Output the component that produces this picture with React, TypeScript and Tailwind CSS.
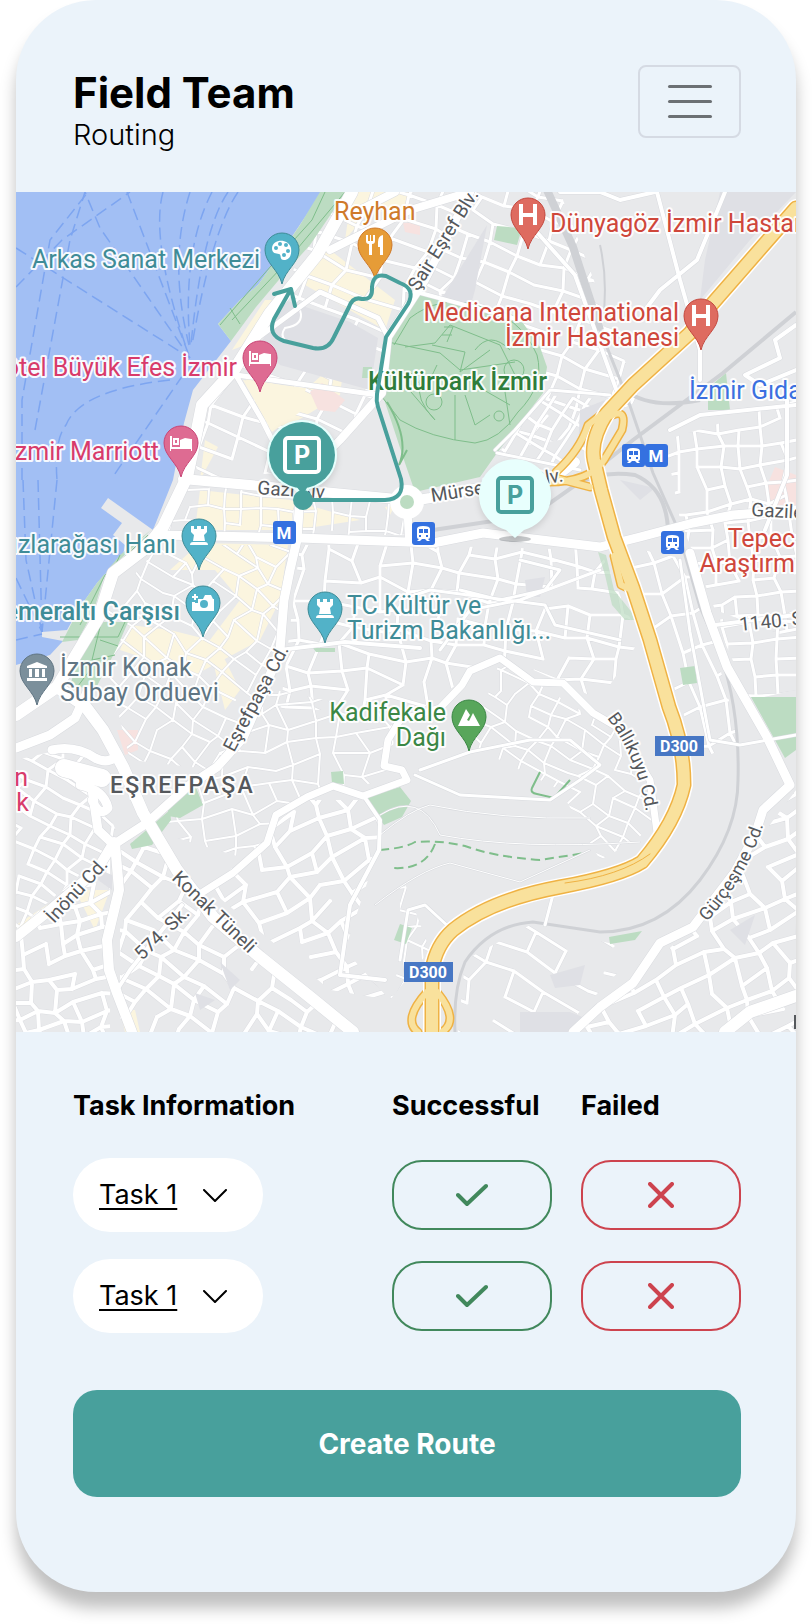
import { useId, type ReactNode } from "react";

type Point = [number, number];

function seeded(seed: number) {
  let s = seed;
  return () => {
    s = (s * 16807) % 2147483647;
    return s / 2147483647;
  };
}

/* Irregular street mesh: a jittered grid whose neighbours are joined at random. */
function mesh(cx: number, cy: number, w: number, h: number, angle: number, dx: number, dy: number, seed: number, jitter = 0.3, keep = 0.84) {
  const rnd = seeded(seed);
  const cols = Math.ceil(w / dx);
  const rows = Math.ceil(h / dy);
  const a = (angle * Math.PI) / 180;
  const pts: Point[][] = [];
  for (let r = 0; r <= rows; r++) {
    const row: Point[] = [];
    for (let c = 0; c <= cols; c++) {
      const x = -w / 2 + c * dx + (rnd() - 0.5) * dx * jitter * 2;
      const y = -h / 2 + r * dy + (rnd() - 0.5) * dy * jitter * 2;
      row.push([Math.round(cx + x * Math.cos(a) - y * Math.sin(a)), Math.round(cy + x * Math.sin(a) + y * Math.cos(a))]);
    }
    pts.push(row);
  }
  let d = "";
  for (let r = 0; r <= rows; r++) {
    for (let c = 0; c <= cols; c++) {
      if (c < cols && rnd() < keep) d += `M${pts[r][c]}L${pts[r][c + 1]}`;
      if (r < rows && rnd() < keep) d += `M${pts[r][c]}L${pts[r + 1][c]}`;
    }
  }
  return d;
}

const districts: { area: string; d: string; width: number }[] = [
  { area: "M345 192H470L412 295L378 400L310 470L200 480L185 430L240 350Z", d: mesh(320, 340, 420, 420, 22, 34, 22, 11, 0.15), width: 3 },
  { area: "M470 192H560L640 400L560 440L500 450L545 390L540 340L417 292Z", d: mesh(540, 330, 260, 340, 20, 27, 21, 23, 0.18), width: 3 },
  { area: "M545 395L615 400L575 470L497 455Z", d: mesh(560, 430, 140, 110, 30, 16, 20, 31, 0.1), width: 3 },
  { area: "M185 485L400 500L420 535H160Z", d: mesh(300, 510, 260, 60, 3, 18, 16, 41, 0.15), width: 2 },
  { area: "M300 545H400L600 550L640 640L600 700L500 655L420 710H280Z", d: mesh(450, 620, 360, 190, 8, 27, 23, 53, 0.3), width: 3 },
  { area: "M160 545H290L275 690L215 770L130 760L95 620Z", d: mesh(200, 650, 220, 260, 35, 21, 17, 67, 0.3), width: 2 },
  { area: "M215 770L275 690L400 715L385 780L300 800L250 860L150 830Z", d: mesh(290, 770, 280, 200, -10, 24, 19, 71, 0.3), width: 2 },
  { area: "M16 760L80 745L120 840L16 930Z", d: mesh(70, 840, 180, 220, 28, 21, 15, 83, 0.22), width: 3 },
  { area: "M16 930L110 850V1032H16Z", d: mesh(65, 950, 170, 210, -15, 21, 16, 97, 0.25), width: 4 },
  { area: "M120 850L150 830L250 950L350 1032H120Z", d: mesh(220, 940, 270, 230, 32, 25, 18, 101, 0.25), width: 4 },
  { area: "M210 890L300 800L380 800L378 850L345 950L390 1000L330 990Z", d: mesh(300, 900, 240, 240, -28, 25, 20, 113, 0.28), width: 4 },
  { area: "M500 660L620 735L655 830L600 860L560 790L470 745Z", d: mesh(570, 750, 230, 210, 30, 20, 14, 127, 0.3), width: 2 },
  { area: "M620 545L690 560L740 740L700 760L650 620Z", d: mesh(670, 640, 130, 230, -18, 24, 32, 131, 0.16), width: 3 },
  { area: "M665 440L796 400V640L715 610L680 520Z", d: mesh(740, 520, 190, 260, -7, 21, 19, 149, 0.22), width: 3 },
  { area: "M715 620L796 610V690L750 700Z", d: mesh(760, 660, 120, 110, -3, 26, 18, 151, 0.1), width: 3 },
  { area: "M690 930L796 790V1032H575Z", d: mesh(710, 930, 300, 260, -24, 26, 19, 163, 0.28), width: 4 },
  { area: "M465 960L530 925L640 950L560 1032H458Z", d: mesh(540, 990, 200, 150, 28, 36, 25, 173, 0.2, 0.7), width: 3 },
  { area: "M400 870L430 950L390 1000L400 960Z", d: mesh(400, 930, 70, 120, 12, 16, 18, 181), width: 2 },
];

const avenues: { d: string; width: number }[] = [
  { d: "M352 192L317 255L270 313L234 370L202 405L197 430L187 477L163 527L147 547L113 573L99 617L73 660L57 687L16 715", width: 12 },
  { d: "M470 192L410 210L330 250M395 192L350 215", width: 8 },
  { d: "M234 372L262 420L295 485M255 340L320 292L378 318L388 337M236 375L378 395", width: 5 },
  { d: "M183 479L260 486L407 500", width: 10 },
  { d: "M160 535L300 538L433 543L483 533L533 539L600 547L640 537L693 523L733 515L796 510", width: 9 },
  { d: "M407 502L430 498L484 487L555 477L575 462", width: 10 },
  { d: "M407 500L409 540M470 192L425 280L388 337L382 393L340 440L310 470", width: 8 },
  { d: "M300 495L297 540L290 570L284 600L280 650L262 695L243 738L217 767L187 787L147 823L113 845", width: 9 },
  { d: "M57 687L85 706L103 730L123 767L143 813L177 870L213 917L260 957L310 997L353 1032", width: 12 },
  { d: "M16 748L50 735L75 718L88 690M52 750Q75 745 95 758Q108 765 118 755M65 768L92 790L98 830L114 845M80 785Q104 790 108 808Q100 818 92 800", width: 9 },
  { d: "M64 768L102 778", width: 18 },
  { d: "M114 842L97 870L50 910L16 937M115 843L119 890L107 940L109 970L117 993L132 1032", width: 10 },
  { d: "M195 897L233 873L267 843L276 815L307 797L333 786L363 796L407 780L402 770L384 766L388 740L400 720L440 708L462 685L470 671L500 658L533 682L563 683L593 713L617 727L650 780L657 832", width: 7 },
  { d: "M115 993L130 970L182 905M280 650L345 642L420 648M363 795L380 820L379 850L350 905L340 975L385 980", width: 4 },
  { d: "M690 553L707 613L727 667L767 737L790 785L763 810L755 835L735 872L693 927L660 943L633 983L600 1007L573 1032", width: 9 },
  { d: "M796 996L750 1012L725 1032", width: 12 },
  { d: "M535 230L575 275L620 400M560 192L600 192L620 200L655 192M657 192L680 280L700 350V380M725 192L697 260L660 290L645 310M417 292L520 320", width: 4 },
  { d: "M796 325L775 340L780 358L745 375L760 385L796 370M670 430L700 415L796 405M787 400V475L765 530M715 625L770 618L796 615", width: 4 },
  { d: "M495 450L515 430L550 390L610 395M497 453L580 470", width: 3 },
  { d: "M415 775L460 795L550 800L580 780L600 765L570 740L530 740L470 752L420 770M400 960L408 910L425 905L450 928M555 887L545 925M680 560L690 632L710 740L740 745L796 735", width: 3 },
  { d: "M520 560L560 570L545 590L500 600L460 590M440 650L470 610L520 600L600 570M400 600L430 590L545 605L555 625L620 640", width: 3 },
  { d: "M380 815Q420 790 440 835Q520 850 640 842M380 835Q410 810 430 805Q500 820 590 818M375 905Q420 870 450 863L520 882L590 850", width: 1 },
];

const ferries = [
  "M16 248L190 358", "M16 287L62 240L130 192", "M35 430L70 240L85 192L100 228L190 358", "M22 480V400L50 240L88 192",
  "M127 192L190 358", "M163 192Q150 240 187 350", "M190 192Q168 260 189 345", "M212 192Q182 250 190 345", "M228 192Q202 230 191 345", "M238 192Q212 230 192 345",
  "M183 375L112 478", "M170 380Q80 390 66 425Q54 440 57 480", "M23 480L26 560L42 632", "M38 480L42 632", "M57 480L42 632", "M16 578L42 632", "M16 640L42 634",
];

const motorway = "M796 208L713 303L690 333L633 385L607 413Q590 440 594 460L601 490L614 537L633 588L650 640L669 707Q684 745 684 785Q676 822 642 862Q620 876 560 887Q490 900 453 930Q436 945 432 970V1032";
const ramps = "M548 482Q590 482 604 460L622 430Q628 405 607 418M556 472Q580 450 588 425L607 410M548 476L590 487M614 556L621 585L636 592M427 992Q402 1020 418 1032M437 992Q460 1020 442 1032";
const railway = "M547 190L573 247L600 330L627 397L653 473L677 527L700 607L720 653Q740 710 738 780Q738 830 700 880Q660 932 600 932L533 922Q490 925 465 962Q453 990 455 1032";
const branchRailway = "M796 312L723 373L633 440L580 482L533 515L433 530M625 390Q650 410 700 400M575 485Q600 470 635 475Q670 490 668 540";
const route = "M303 500H385Q405 499 401 479L378 407Q376 401 377 394L386 337L408 304Q416 289 400 283L386 276Q373 273 372 287V290Q372 300 362 299Q353 296 349 307L334 337Q328 351 313 348L284 341Q267 335 274 319L291 289M274 294L291 289L295 306";

function Bed() {
  return (
    <g fill="white">
      <path d="M-11-7H-9V4H10V-4H11V8H10V6H-10V8H-11Z" />
      <path fillRule="evenodd" d="M-8-5H-2V2H-8ZM-6-3V0H-4V-3Z" />
      <path d="M-1 4V-3L4-5L10-4V4Z" />
    </g>
  );
}
function Rook() {
  return <path d="M-8-10H-5V-7H-2V-10H2V-7H5V-10H8V-4L5-1L6 5H-6L-5-1L-8-4ZM-9 9Q-9 6-6 6H6Q9 6 9 9Z" fill="white" />;
}
function Hospital() {
  return <path d="M-7-11V10M7-11V10M-7 0H7" stroke="white" strokeWidth="4" />;
}
function Palette() {
  return (
    <g>
      <path d="M-10-2C-9-11 6-12 9-2C10 4 8 10 2 10C-3 10 0 5-3 4C-6 3-10 4-10-2Z" fill="white" />
      <g fill="#52b2c8"><circle cx="-6" cy="-2" r="2" /><circle cx="-2" cy="-6" r="2" /><circle cx="4" cy="-5" r="2" /><circle cx="6" cy="1" r="2" /><circle cx="2" cy="5" r="2" /></g>
    </g>
  );
}
function Utensils() {
  return <path d="M-9-10V-4Q-9-1-6-1V10H-3V-1Q0-1 0-4V-10H-2V-4H-4V-10H-5V-4H-7V-10ZM8-10Q3-9 3-3V2H5V10H8V-10Z" fill="white" />;
}
function Camera() {
  return (
    <g>
      <path d="M-3-4H0L2-8H8L10-4H11V8H-11V-1H-8V0H-5V-4Z" fill="white" />
      <circle cx="1" cy="1" r="4" fill="#52b2c8" />
      <path d="M-8-9V-3M-11-6H-5" stroke="white" strokeWidth="2" />
    </g>
  );
}
function Museum() {
  return <path d="M-10-5L0-9L10-5V-3H-10ZM-8-2H-5V6H-8ZM-2-2H2V6H-2ZM5-2H8V6H5ZM-10 7H10V10H-10Z" fill="white" />;
}
function Mountain() {
  return <path d="M-11 9L-3-8L1-2L-2 3L0 4L4-4L11 9Z" fill="white" />;
}

function Pin({ x, y, color, edge, children }: { x: number; y: number; color: string; edge: string; children: ReactNode }) {
  return (
    <g transform={`translate(${x} ${y})`}>
      <path d="M0 34C-3 20-17 13-17 0A17 17 0 0 1 17 0C17 13 3 20 0 34Z" fill={color} stroke={edge} strokeWidth="1" />
      {children}
    </g>
  );
}

const halo = "stroke-white/90 [paint-order:stroke] [stroke-linejoin:round] [stroke-width:4px]";

function Place({ x, y, end, className, children }: { x: number; y: number; end?: boolean; className: string; children: string }) {
  return (
    <text x={x} y={y} textAnchor={end ? "end" : "start"} className={`text-[25px] ${halo} ${className}`}>
      {children}
    </text>
  );
}

function Street({ x, y, angle, children }: { x: number; y: number; angle: number; children: string }) {
  return (
    <text transform={`translate(${x} ${y}) rotate(${angle})`} className={`fill-[#55585c] text-[19px] ${halo}`}>
      {children}
    </text>
  );
}

function Metro({ x, y }: { x: number; y: number }) {
  return (
    <g transform={`translate(${x} ${y})`}>
      <rect width="23" height="23" rx="3" fill="#3471e0" />
      <text x="11" y="18" textAnchor="middle" className="fill-white text-[17px] font-bold">M</text>
    </g>
  );
}

function Train({ x, y }: { x: number; y: number }) {
  return (
    <g transform={`translate(${x} ${y})`}>
      <rect width="23" height="23" rx="3" fill="#3471e0" />
      <path d="M5 7Q5 4 11 4Q18 4 18 7V15Q18 17 16 17L18 19H15L13 17H10L8 19H5L7 17Q5 17 5 15Z" fill="white" />
      <path d="M7 7H11V11H7ZM12 7H16V11H12ZM7 13H9V15H7ZM14 13H16V15H14Z" fill="#3471e0" />
    </g>
  );
}

function RoadShield({ x, y }: { x: number; y: number }) {
  return (
    <g transform={`translate(${x} ${y})`}>
      <rect width="49" height="20" fill="#4777c4" />
      <text x="24" y="16" textAnchor="middle" className="fill-white text-[16px] font-bold">D300</text>
    </g>
  );
}

function ParkingSign({ x, y, color }: { x: number; y: number; color: string }) {
  return (
    <g transform={`translate(${x} ${y})`}>
      <rect x="-17" y="-17" width="34" height="34" rx="3" fill="none" stroke={color} strokeWidth="4" />
      <text y="9" textAnchor="middle" fill={color} className="font-[Inter] text-[25px] font-bold">P</text>
    </g>
  );
}

function CityMap() {
  const id = useId();
  return (
    <svg viewBox="16 192 780 840" className="block h-auto w-full overflow-hidden font-[Roboto,sans-serif]" role="img" aria-label="Route map of İzmir">
      <rect x="16" y="192" width="780" height="840" fill="#e8e9eb" />
      <g fill="#fbf5df">
        <path d="M352 192L410 192L405 215L370 210L345 240Z" />
        <path d="M312 255L330 250L395 300L385 330L305 285Z" />
        <path d="M265 300L272 300L245 345L232 350ZM245 378L305 390L345 355L340 395L290 425L270 430Z" />
        <path d="M205 440L218 447L200 480ZM200 490L290 500L360 520L295 530H195Z" />
        <path d="M200 543L288 545L280 600L260 640L195 675L120 650L130 625L170 630L210 640L240 600L215 570L170 570Z" />
        <path d="M215 640L240 690L225 710L215 670ZM75 890L110 890L95 930L85 910Z" />
        <path d="M16 925L50 903L55 910L20 940ZM120 1010L135 1010L140 1032H125ZM385 507L395 505L390 515Z" />
      </g>
      <g fill="#f7e2e0">
        <path d="M403 223L420 222V235L405 232ZM117 730H138V750L125 755ZM765 490L775 467L796 475V505L768 505Z" />
      </g>

      {districts.map((district, i) => (
        <g key={i}>
          <clipPath id={`${id}-${i}`}><path d={district.area} /></clipPath>
          <g clipPath={`url(#${id}-${i})`} fill="none">
            <path d={district.d} stroke="#dcdde1" strokeWidth={district.width + 1} />
            <path d={district.d} stroke="white" strokeWidth={district.width} strokeLinecap="round" />
          </g>
        </g>
      ))}

      <g fill="#dfe0e5">
        <path d="M285 300L350 322L378 338L370 390L280 365L260 345Z" />
        <path d="M487 225L475 290L470 308L442 298Z" />
        <path d="M720 192H796L750 240L700 300L705 260Z" />
        <path d="M580 410L605 400L560 465L578 450Z" />
        <path d="M620 480L655 488L640 500Z" />
        <path d="M520 1012L570 1012L590 1020L570 1032H520Z" />
        <path d="M550 975L585 965L580 985L555 988Z" />
        <path d="M220 962L240 980L230 990ZM195 993L215 1000L200 1010ZM100 870L112 875V890L98 880Z" />
        <path d="M730 930L755 915L745 945ZM525 580L545 577L540 597H527Z" />
      </g>
      <path d="M243 380L306 388L300 412L272 432Z" fill="#fbf5df" />
      <path d="M310 392L322 383L345 400L335 412L318 410Z" fill="#f7e2e0" />
      <path d="M300 310Q305 325 285 328Q280 335 285 340" fill="none" stroke="white" strokeWidth="2" />

      <path d="M16 192H322L295 232L283 250L258 285L240 300L218 324L231 341L193 390L184 423L173 480L153 530L108 498L101 508L122 523L113 535L125 545L123 555L97 583L80 607L67 630L42 632V637L63 641L50 655L16 665Z" fill="#a2bff4" />
      <g fill="none" stroke="#7da5f0" strokeWidth="1.5" strokeDasharray="12 6">
        {ferries.map((d) => <path key={d} d={d} />)}
      </g>
      <g fill="#bcdcc2">
        <path d="M320 192H346L310 245L283 275L256 307L231 341L218 324L240 300L258 285L283 250L300 225Z" />
        <path d="M151 530L128 552L105 573L94 610L78 640L62 642L80 607L97 583L120 555Z" />
        <path d="M100 622H128L116 650L100 680L95 690L70 685L80 655Z" />
        <path d="M417 294L510 313L523 323L540 347L547 367L543 393L517 427L497 453L480 477L415 492L405 463L382 393L388 337L405 302Z" />
        <path d="M497 226L522 228L517 245L494 240ZM363 367H372V378H362Z" />
        <path d="M708 388L726 373L730 410H708ZM680 668L695 666L697 683L683 685ZM751 697H796V750L785 758Z" />
        <path d="M365 798L400 787L411 801L402 817L384 825ZM331 772L343 771L344 784L332 783Z" />
        <path d="M168 805L195 785L203 805L180 818L168 816ZM130 844L170 810L171 820L152 845L132 849Z" />
        <path d="M400 924L412 928L406 944L394 940ZM609 937L642 931L635 940L610 944ZM313 648H335V652H316Z" />
        <path d="M598 552L606 555L614 590L638 620L625 620L612 605L605 575Z" opacity=".7" />
      </g>
      <g fill="none" stroke="#7fbe8b" strokeWidth="2">
        <path d="M325 192L312 220L285 250L250 290L220 325M345 192L282 267L232 320M230 308L240 324M148 535L105 575L80 625M120 555L95 610M60 637H118L125 622M100 627L92 660L115 655M100 640L118 646M75 690L90 670" strokeWidth="1" />
        <path d="M394 345L410 318Q440 295 475 305Q520 315 537 355Q545 385 518 412Q500 440 475 443Q430 438 400 420L382 397M405 347L435 343L450 325L500 345L515 375L505 392L510 425M388 342L440 353L460 370L515 362M432 345L465 352L460 372L490 350M420 380Q415 400 435 420L405 385M437 365L425 390L410 372M455 395V440M465 395L475 425L490 415M475 385L510 405M475 350Q490 330 510 350M444 327H453L447 342M442 335H452" strokeWidth="1" />
        <g strokeWidth="1"><circle cx="514" cy="370" r="10" /><circle cx="434" cy="402" r="8" /><circle cx="499" cy="416" r="5" /></g>
        <path d="M387 402Q410 440 399 465L407 450M540 772L532 788Q530 793 537 794L554 798L570 780" />
        <path d="M380 850Q405 848 415 842Q440 840 465 846Q495 857 540 860L585 853M435 844Q425 870 393 868" strokeDasharray="9 5" />
      </g>
      <g fill="none" stroke="#cfd1d5">
        <path d={branchRailway} strokeWidth="4" />
        <path d={railway} strokeWidth="3" />
        <path d="M547 190L573 247L600 330" strokeWidth="8" />
        <path d="M600 245Q608 280 603 320" strokeWidth="2" />
      </g>
      <g fill="none" strokeLinejoin="round" strokeLinecap="round">
        {avenues.map((road) => <path key={road.d} d={road.d} stroke="#d9dbdf" strokeWidth={road.width + 1} />)}
        {avenues.map((road) => <path key={road.d} d={road.d} stroke="white" strokeWidth={road.width} />)}
        <circle cx="407" cy="502" r="12" stroke="white" strokeWidth="10" fill="#bcdcc2" />
        <path d={ramps} stroke="#efb244" strokeWidth="9" />
        <path d={motorway} stroke="white" strokeWidth="18" />
        <path d={motorway} stroke="#efb244" strokeWidth="15" />
        <path d={ramps} stroke="#f9e19c" strokeWidth="6" />
        <path d={motorway} stroke="#f9e19c" strokeWidth="12" />
        <path d="M565 883Q620 876 650 854" stroke="#efb244" strokeWidth="1" />
      </g>

      <Street x={418} y={292} angle={-58}>Şair Eşref Blv.</Street>
      <Street x={257} y={494} angle={4}>Gazi Blv</Street>
      <Street x={432} y={502} angle={-9}>Mürselpaşa Blv.</Street>
      <Street x={234} y={753} angle={-62}>Eşrefpaşa Cd.</Street>
      <Street x={54} y={924} angle={-47}>İnönü Cd.</Street>
      <Street x={142} y={961} angle={-44}>574. Sk.</Street>
      <Street x={171} y={879} angle={44}>Konak Tüneli</Street>
      <Street x={751} y={516} angle={3}>Gaziler Cd.</Street>
      <Street x={740} y={631} angle={-6}>1140. Sk.</Street>
      <path id={`${id}-b`} d="M607 718Q640 760 648 825" fill="none" />
      <path id={`${id}-g`} d="M707 922Q752 872 767 812" fill="none" />
      <text className={`fill-[#55585c] text-[18px] ${halo}`}><textPath href={`#${id}-b`}>Ballıkuyu Cd.</textPath></text>
      <text className={`fill-[#55585c] text-[18px] ${halo}`}><textPath href={`#${id}-g`}>Gürçeşme Cd.</textPath></text>

      <Place x={334} y={220} className="fill-[#cf7a2b]">Reyhan</Place>
      <Place x={260} y={268} end className="fill-[#3f8c97]">Arkas Sanat Merkezi</Place>
      <Place x={237} y={376} end className="fill-[#d83b6b]">ôtel Büyük Efes İzmir</Place>
      <Place x={159} y={460} end className="fill-[#d83b6b]">İzmir Marriott</Place>
      <Place x={176} y={553} end className="fill-[#3f8c97]">ızlarağası Hanı</Place>
      <Place x={180} y={620} end className="fill-[#3f8c97] font-medium">emeraltı Çarşısı</Place>
      <Place x={60} y={676} className="fill-[#607583]">İzmir Konak</Place>
      <Place x={60} y={701} className="fill-[#607583]">Subay Orduevi</Place>
      <Place x={347} y={614} className="fill-[#3f8c97]">TC Kültür ve</Place>
      <Place x={347} y={639} className="fill-[#3f8c97]">Turizm Bakanlığı...</Place>
      <Place x={446} y={721} end className="fill-[#3b8745]">Kadifekale</Place>
      <Place x={446} y={746} end className="fill-[#3b8745]">Dağı</Place>
      <Place x={550} y={232} className="fill-[#cf473b]">Dünyagöz İzmir Hastan</Place>
      <Place x={679} y={321} end className="fill-[#cf473b]">Medicana International</Place>
      <Place x={679} y={346} end className="fill-[#cf473b]">İzmir Hastanesi</Place>
      <Place x={547} y={390} end className="fill-[#2f7d3b] font-medium">Kültürpark İzmir</Place>
      <Place x={689} y={399} className="fill-[#3b70e0]">İzmir Gıda</Place>
      <Place x={795} y={547} end className="fill-[#cf473b]">Tepec</Place>
      <Place x={795} y={572} end className="fill-[#cf473b]">Araştırm</Place>
      <Place x={28} y={786} end className="fill-[#d83b6b]">n</Place>
      <Place x={29} y={811} end className="fill-[#d83b6b]">k</Place>
      <text x="110" y="793" className={`fill-[#55585c] text-[23px] font-medium tracking-widest ${halo}`}>EŞREFPAŞA</text>

      <Pin x={282} y={250} color="#52b2c8" edge="#3f8c97"><Palette /></Pin>
      <Pin x={375} y={245} color="#e69c37" edge="#cf7a2b"><Utensils /></Pin>
      <Pin x={260} y={358} color="#de6b92" edge="#c94576"><Bed /></Pin>
      <Pin x={181} y={443} color="#de6b92" edge="#c94576"><Bed /></Pin>
      <Pin x={199} y={536} color="#52b2c8" edge="#3f8c97"><Rook /></Pin>
      <Pin x={203} y={603} color="#52b2c8" edge="#3f8c97"><Camera /></Pin>
      <Pin x={325} y={609} color="#52b2c8" edge="#3f8c97"><Rook /></Pin>
      <Pin x={37} y={671} color="#7b8f9b" edge="#607583"><Museum /></Pin>
      <Pin x={469} y={717} color="#58a65b" edge="#3b8745"><Mountain /></Pin>
      <Pin x={528} y={215} color="#de6b60" edge="#c4483e"><Hospital /></Pin>
      <Pin x={701} y={316} color="#de6b60" edge="#c4483e"><Hospital /></Pin>

      <Metro x={273} y={521} />
      <Train x={412} y={522} />
      <Train x={622} y={444} />
      <Metro x={645} y={444} />
      <Train x={661} y={531} />
      <RoadShield x={655} y={736} />
      <RoadShield x={404} y={962} />
      <path d="M795 1015V1029" stroke="#55585c" strokeWidth="2" />

      <path d={route} fill="none" stroke="#48a09c" strokeWidth="4" strokeLinejoin="round" strokeLinecap="round" />
      <g className="drop-shadow-md">
        <path d="M302 499L294 489A35 35 0 1 1 310 489Z" fill="#e6fffd" />
        <circle cx="302" cy="455" r="33" fill="#48a09c" />
        <path d="M296 486H308L303 495Z" fill="#48a09c" />
      </g>
      <circle cx="303" cy="500" r="10" fill="#48a09c" />
      <ParkingSign x={302} y={455} color="white" />
      <ellipse cx="515" cy="539" rx="16" ry="3" fill="#8b8f94" opacity=".5" />
      <path d="M515 538L506 530A36 36 0 1 1 524 530Z" fill="#e8fffd" className="drop-shadow-md" />
      <ParkingSign x={515} y={495} color="#48a09c" />
    </svg>
  );
}

function TaskRow({ number }: { number: number }) {
  return (
    <>
      <div className="relative w-[190px]">
        <select aria-label={`Task for row ${number}`} className="h-[74px] w-full appearance-none rounded-full bg-white pl-[26px] pr-16 text-[27px] underline decoration-2 underline-offset-4">
          <option>Task 1</option>
          <option>Task 2</option>
        </select>
        <svg viewBox="0 0 24 13" className="pointer-events-none absolute right-9 top-[31px] h-[13px] w-6" fill="none" stroke="black" strokeWidth="2" aria-hidden="true">
          <path d="M1 1L12 12L23 1" strokeLinecap="round" strokeLinejoin="round" />
        </svg>
      </div>
      <button aria-label={`Mark row ${number} successful`} className="flex h-[70px] items-center justify-center rounded-[30px] border-2 border-[#41885c] text-[#41885c]">
        <svg viewBox="0 0 32 24" className="h-6 w-8" fill="none" stroke="currentColor" strokeWidth="4" strokeLinecap="round" strokeLinejoin="round" aria-hidden="true">
          <path d="M2 12L11 21L30 3" />
        </svg>
      </button>
      <button aria-label={`Mark row ${number} failed`} className="flex h-[70px] items-center justify-center rounded-[30px] border-2 border-[#cd434e] text-[#cd434e]">
        <svg viewBox="0 0 26 26" className="size-[26px]" fill="none" stroke="currentColor" strokeWidth="4" strokeLinecap="round" aria-hidden="true">
          <path d="M2 2L24 24M24 2L2 24" />
        </svg>
      </button>
    </>
  );
}

export default function App() {
  return (
    <div className="bg-white px-4 pb-8 font-[Inter,sans-serif] text-black">
      <main className="overflow-hidden rounded-[80px] bg-[#ebf3fa] shadow-[0_16px_16px_rgba(0,0,0,0.25)]">
        <header className="flex items-start justify-between pb-[39px] pl-[57px] pr-[55px] pt-[65px]">
          <div className="pt-1">
            <h1 className="text-[42px] font-bold leading-[48px]">Field Team</h1>
            <p className="text-[29px] font-light leading-[36px]">Routing</p>
          </div>
          <button aria-label="Open menu" className="flex h-[73px] w-[103px] flex-col items-center justify-center gap-[12px] rounded-lg border-2 border-[#d5dae3]">
            <span className="h-[3px] w-11 rounded-full bg-[#6c7074]" />
            <span className="h-[3px] w-11 rounded-full bg-[#6c7074]" />
            <span className="h-[3px] w-11 rounded-full bg-[#6c7074]" />
          </button>
        </header>

        <CityMap />

        <section className="pb-[95px] pl-[57px] pr-[55px] pt-[58px]">
          <div className="grid grid-cols-[1fr_160px_160px] items-center gap-x-[29px] gap-y-[27px]">
            <h2 className="mb-[9px] text-[27px] font-bold leading-[32px]">Task Information</h2>
            <h2 className="mb-[9px] text-[27px] font-bold leading-[32px]">Successful</h2>
            <h2 className="mb-[9px] text-[27px] font-bold leading-[32px]">Failed</h2>
            <TaskRow number={1} />
            <TaskRow number={2} />
          </div>
          <button className="mt-[57px] h-[107px] w-full rounded-[24px] bg-[#48a09c] text-[28px] font-bold text-white">Create Route</button>
        </section>
      </main>
    </div>
  );
}
